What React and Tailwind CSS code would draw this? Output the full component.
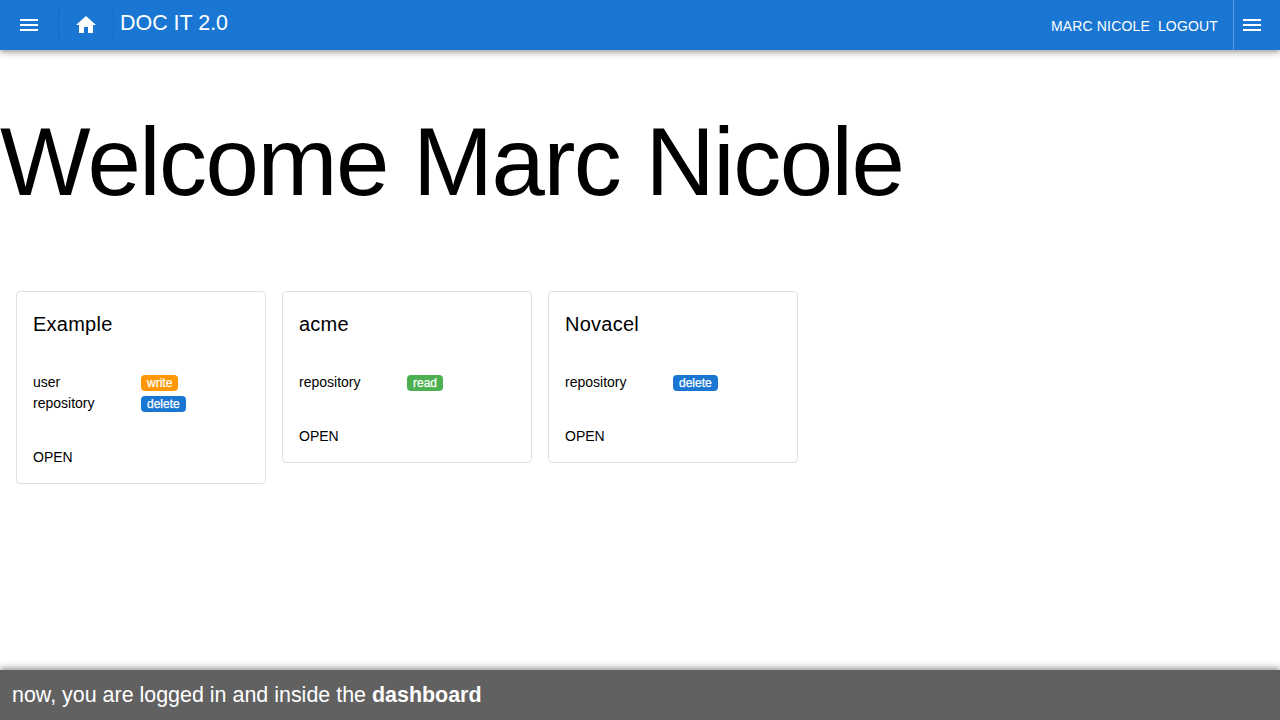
const Menu = () => (
  <svg width="24" height="24" viewBox="0 0 24 24" fill="#fff"><path d="M3 18h18v-2H3v2zm0-5h18v-2H3v2zm0-7v2h18V6H3z" /></svg>
);
const Home = () => (
  <svg width="24" height="24" viewBox="0 0 24 24" fill="#fff"><path d="M10 20v-6h4v6h5v-8h3L12 3 2 12h3v8z" /></svg>
);

const cards = [
  { name: "Example", rows: [["user", "write", "bg-[#ff9800]"], ["repository", "delete", "bg-[#1976d2]"]] },
  { name: "acme", rows: [["repository", "read", "bg-[#4caf50]"]] },
  { name: "Novacel", rows: [["repository", "delete", "bg-[#1976d2]"]] },
];

export default function App() {
  return (
    <div className="relative flex h-[720px] flex-col overflow-hidden bg-white font-['Liberation_Sans',Arial,sans-serif] text-black">
      <header className="z-10 flex h-[50px] shrink-0 items-center bg-[#1976d2] text-white shadow-[0_2px_4px_-1px_rgba(0,0,0,0.2),0_4px_5px_0_rgba(0,0,0,0.14),0_1px_10px_0_rgba(0,0,0,0.12)]">
        <div className="flex w-[58px] justify-center pr-[1px]"><Menu /></div>
        <div className="flex h-[34px] w-[56px] items-center justify-center rounded-[4px] border-x border-[#166cc2] pr-[1px]"><Home /></div>
        <div className="ml-[6px] self-start pt-[11px] text-[21.44px] leading-[24px]">DOC IT 2.0</div>
        <div className="ml-auto flex gap-2 pt-[2px] text-[14px] tracking-[0.16px] uppercase">
          <span>Marc Nicole</span>
          <span>Logout</span>
        </div>
        <div className="ml-[15px] flex h-full w-[47px] items-center justify-center border-l border-[#5a9be0] pr-[10px]"><Menu /></div>
      </header>
      <main className="flex-1">
        <h1 className="mt-[56px] text-[96px] leading-[112px] font-normal tracking-[-1.5px]">Welcome Marc Nicole</h1>
        <div className="mt-[73px] flex items-start gap-4 px-4">
          {cards.map((c) => (
            <div key={c.name} className="w-[250px] rounded border border-[#e0e0e0] p-4">
              <div className="text-[20px] leading-[32px] tracking-[0.25px]">{c.name}</div>
              <div className="mt-[32px] flex flex-col text-[14px] leading-[21px]">
                {c.rows.map(([label, tag, color]) => (
                  <div key={label} className="flex items-center">
                    <span className="w-[108px]">{label}</span>
                    <span className={`${color} rounded-[4px] px-[6px] text-[12px] leading-[16px] font-normal text-white [-webkit-text-stroke:0.25px_#fff]`}>{tag}</span>
                  </div>
                ))}
              </div>
              <div className="mt-[33px] mb-[-1px] text-[14px] leading-[21px]">OPEN</div>
            </div>
          ))}
        </div>
      </main>
      <footer className="z-10 flex h-[50px] shrink-0 items-center bg-[#616161] px-3 text-[21.44px] text-white shadow-[0_-2px_4px_-1px_rgba(0,0,0,0.2),0_-4px_5px_0_rgba(0,0,0,0.14),0_-1px_10px_0_rgba(0,0,0,0.12)]">
        <span>now, you are logged in and inside the <b>dashboard</b></span>
      </footer>
    </div>
  );
}
